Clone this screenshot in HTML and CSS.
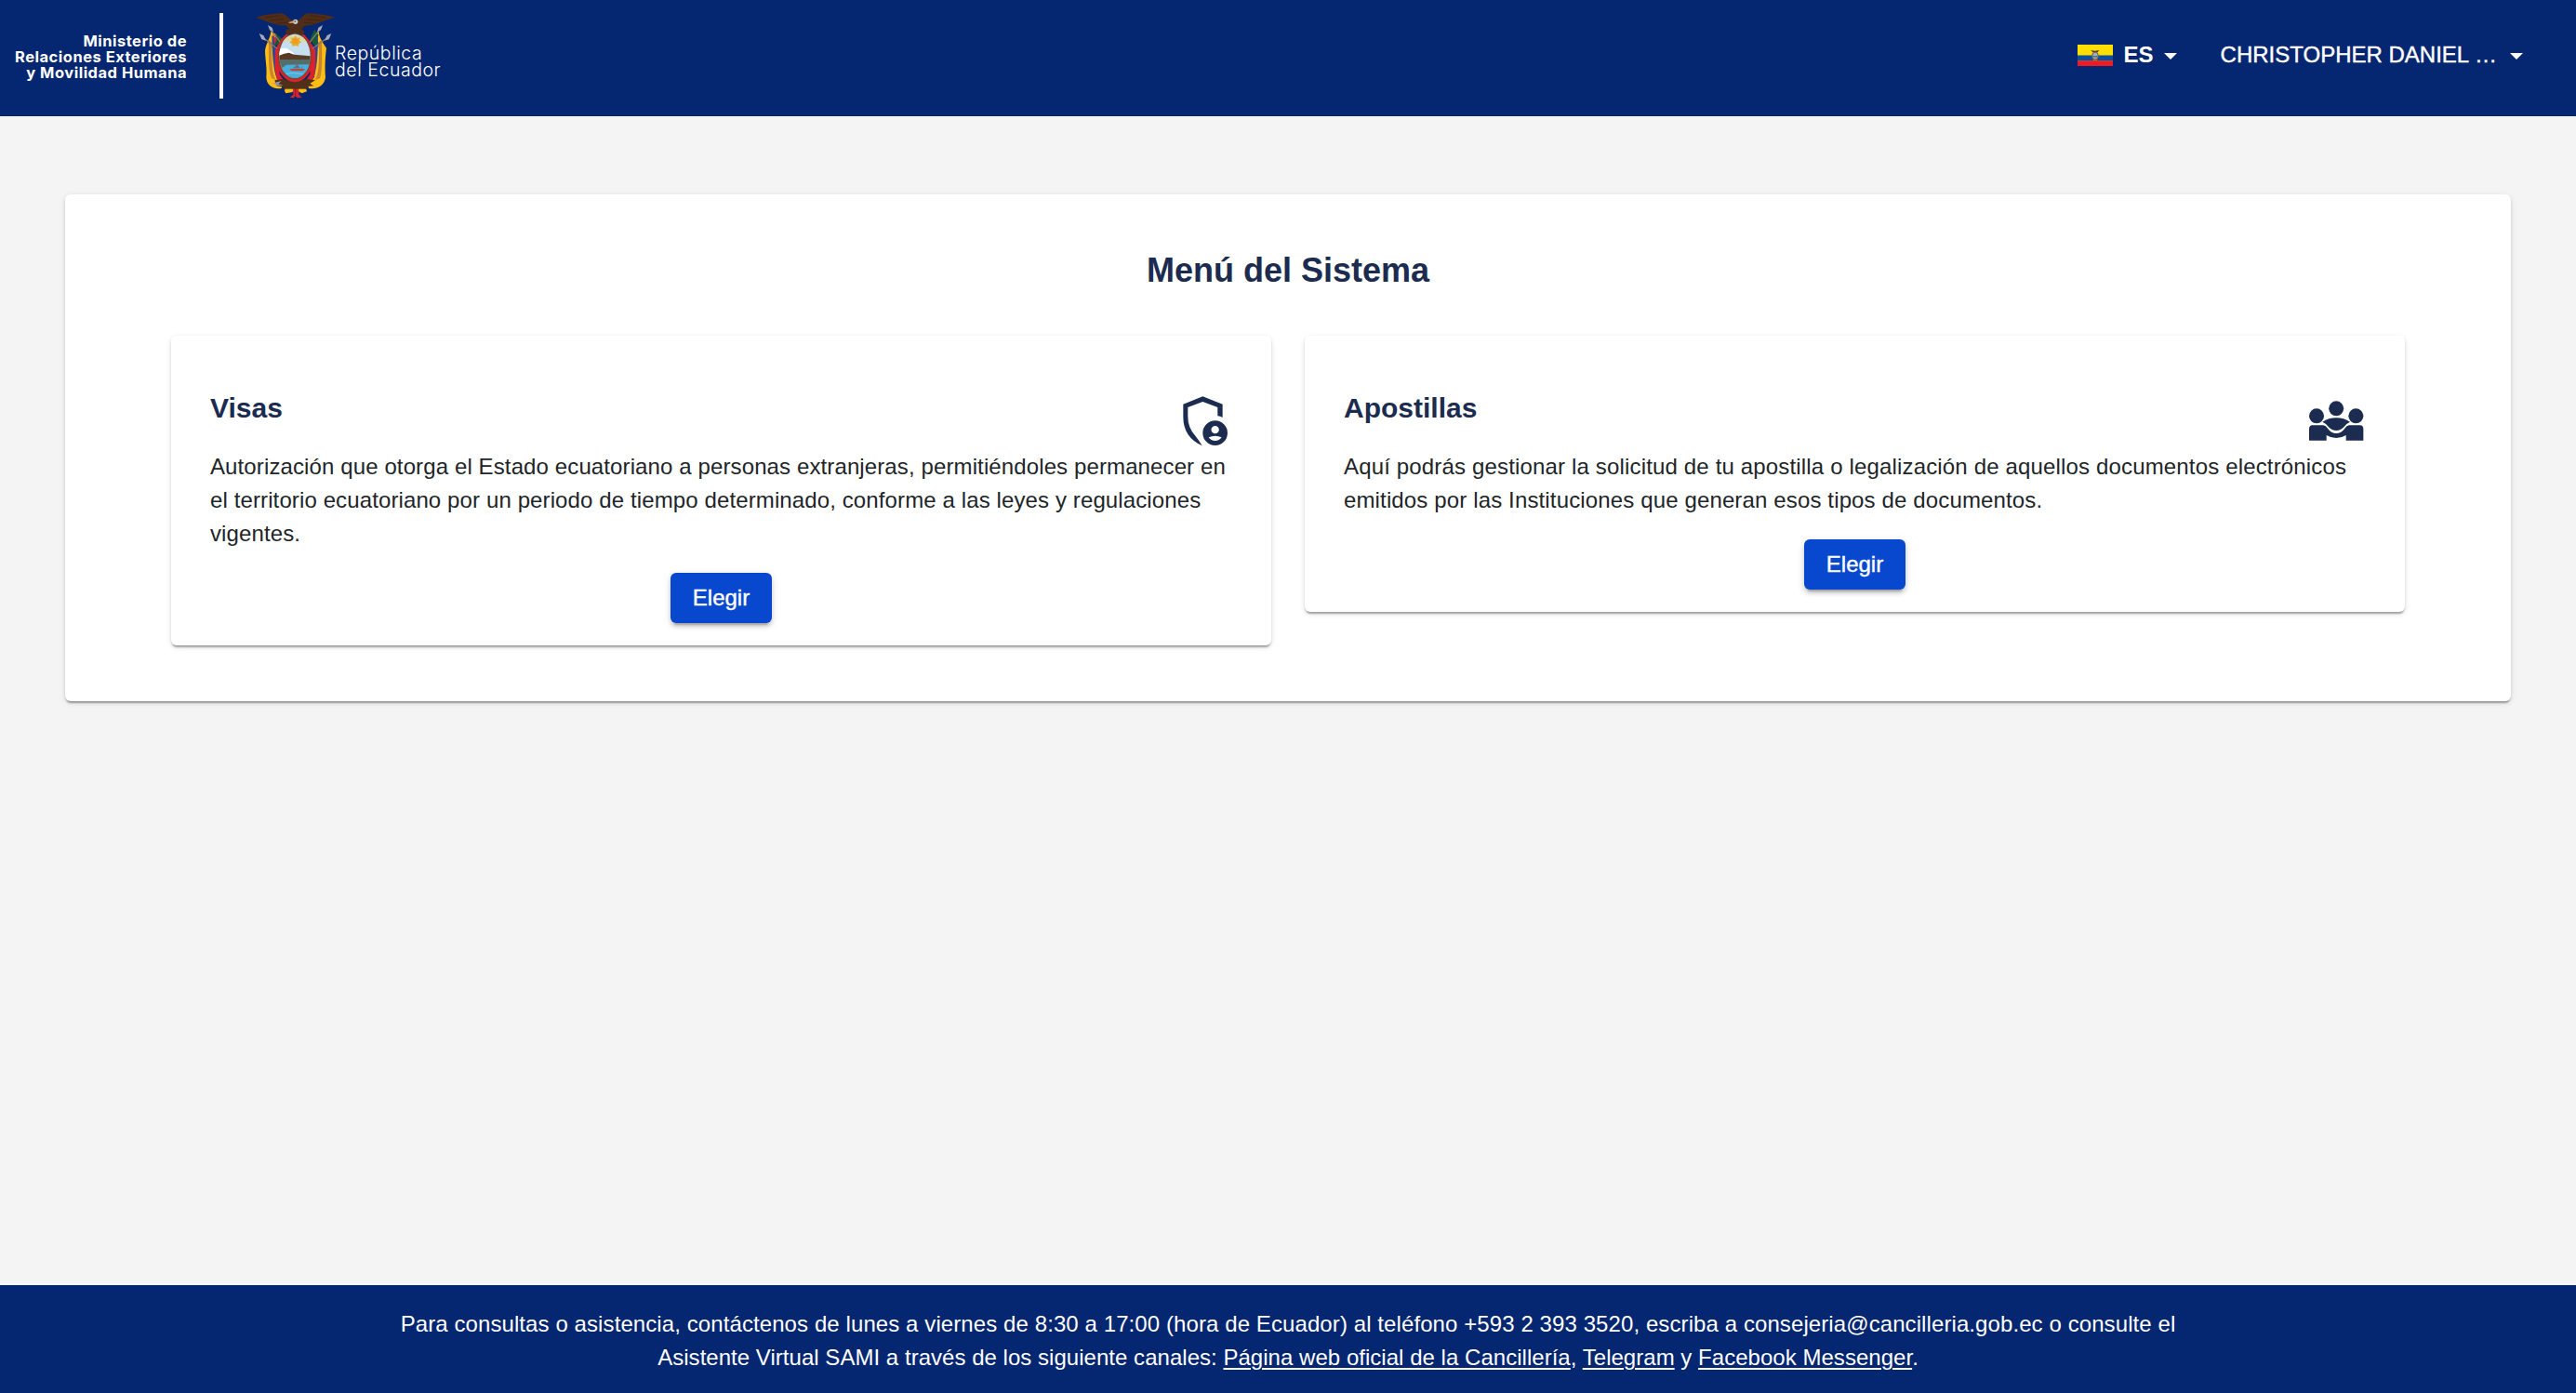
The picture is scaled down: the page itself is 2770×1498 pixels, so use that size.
FILE: index.html
```
<!DOCTYPE html>
<html lang="es">
<head>
<meta charset="utf-8">
<title>Menú del Sistema</title>
<link rel="stylesheet" href="styles.css">
</head>
<body>
<header class="header">
  <div class="ministry">Ministerio de<br>Relaciones Exteriores<br>y Movilidad Humana</div>
  <div class="divider"></div>
  <svg class="emblem" viewBox="0 0 285 330" aria-hidden="true">
    <!-- flags -->
    <path d="M64 86 C62 110 46 128 45 150 C46 180 52 205 49 235 C50 262 75 275 98 270 L104 248 L84 235 L76 150 L80 95Z" fill="#fdbd14"/>
    <path d="M218 86 C220 110 236 128 243 140 C238 180 238 205 240 235 C236 262 212 275 186 270 L180 248 L204 235 L212 150 L204 95Z" fill="#fdbd14"/>
    <path d="M56 112 L74 130 L66 142 C68 185 66 215 78 240 L90 246 L66 238 C54 210 58 160 56 112Z" fill="#c9862d"/>
    <path d="M228 112 L212 130 L220 142 C218 185 220 215 208 240 L196 246 L222 238 C232 210 228 160 228 112Z" fill="#c9862d"/>
    <path d="M67 100 L77 105 L78 150 L92 235 L84 240 C72 215 68 160 67 100Z" fill="#27489c"/>
    <path d="M216 100 L206 105 L206 150 L192 235 L200 240 C212 215 216 160 216 100Z" fill="#27489c"/>
    <path d="M78 145 L92 120 V225 L112 252 L86 246 C74 220 76 180 78 145Z M207 145 L190 120 V225 L172 252 L198 246 C210 220 208 180 207 145Z" fill="#d9222d"/>
    <path d="M70 92 L78 108 L90 112 L76 130Z M213 92 L205 108 L190 112 L208 130Z" fill="#d9222d"/>
    <path d="M80 94 L98 108 L112 106 L96 122 L86 130 L72 136 L82 115Z M205 80 L196 98 L190 112 L204 132 L218 124 L210 110 L218 98Z" fill="#125b35"/>
    <!-- lances -->
    <path d="M38 106 L90 146 M62 80 L100 128 M247 106 L192 146 M222 80 L184 128" stroke="#8d7772" stroke-width="4" fill="none"/>
    <path d="M54 66 L68 74 L72 88 L60 82Z M26 93 L40 99 L48 116 L34 112Z M231 66 L217 74 L213 88 L225 82Z M259 93 L245 99 L237 116 L251 112Z" fill="#a5a9b8"/>
    <!-- ribbons under the shield -->
    <path d="M112 262 L138 262 L134 282 L112 286 L108 278Z M150 262 L174 262 L180 280 L164 286 L150 278Z" fill="#fdbd14"/>
    <path d="M134 260 H153 L154 290 L164 299 L149 301 L143 295 L137 301 L125 299 L136 290Z" fill="#d9222d"/>
    <path d="M143 262 V296" stroke="#7d2230" stroke-width="3"/>
    <path d="M76 244 L102 240 L140 250 L180 240 L207 244 L190 254 L202 262 L180 264 L140 258 L106 266 L82 262Z" fill="#503019"/>
    <path d="M104 244 H182 V272 H104Z" fill="#503019"/>
    <path d="M72 253 L98 246 L88 256 L104 260 L84 262Z" fill="#9b94a0"/>
    <!-- oval shield -->
    <ellipse cx="141" cy="168" rx="60" ry="82" fill="#d9222d"/>
    <ellipse cx="141" cy="166" rx="54" ry="75" fill="#704a2d"/>
    <clipPath id="oval"><ellipse cx="141" cy="166" rx="50" ry="71"/></clipPath>
    <g clip-path="url(#oval)">
      <rect x="85" y="90" width="112" height="155" fill="#c5dff0"/>
      <path d="M92 120 Q141 96 190 120" stroke="#e4d5a1" stroke-width="13" fill="none"/>
      <path d="M85 146 Q106 137 119 143 L140 158 L110 166 L85 168Z" fill="#fff"/>
      <path d="M85 166 Q106 157 122 155 L138 161 L197 166 V186 H85Z" fill="#573b24"/>
      <path d="M85 178 H197 V195 L130 199 L85 190Z" fill="#566e6b"/>
      <path d="M85 178 H197 V245 H85Z" fill="#566e6b"/>
      <path d="M85 214 L114 194 L185 193 L197 200 V245 H85Z" fill="#48aedd"/>
      <path d="M124 207 L174 207 L168 214 L130 214Z" fill="#b94737"/>
      <path d="M148 192 L157 204 H139Z M164 199 V207 M138 200 V207" fill="#64717d" stroke="#64717d" stroke-width="2"/>
      <path d="M110 225 Q132 216 174 226" stroke="#7bc8e9" stroke-width="3" fill="none"/>
    </g>
    <path d="M143 99 L148 107 L158 107 L156 116 L163 121 L154 127 L152 135 L143 132 L134 135 L132 127 L123 121 L131 116 L128 107 L138 107Z" fill="#e7ae2b"/>
    <circle cx="143" cy="118" r="9" fill="#f2991f"/>
    <!-- condor -->
    <path d="M15 41 C42 33 70 29 101 28 C116 35 124 48 136 51 H151 C160 47 165 35 180 28 C213 29 243 33 270 41 L239 51 C220 59 194 68 173 68 L163 79 L173 88 L164 100 L142 91 L119 99 L110 85 L123 77 L111 67 C82 69 57 57 44 52Z" fill="#502d18"/>
    <path d="M45 42 L92 35 M58 51 L105 47 M81 61 L115 58 M239 42 L191 35 M226 51 L178 47 M204 61 L171 58" stroke="#402411" stroke-width="3"/>
    <circle cx="143" cy="55" r="8" fill="#c8cac6"/>
    <path d="M120 57 L137 52 V59 L125 60Z" fill="#bda17a"/>
    <circle cx="142" cy="54" r="3" fill="#756c64"/>
  </svg>
  <div class="republic">República<br>del Ecuador</div>
  <nav class="nav">
    <svg class="flag" viewBox="0 0 38 23" aria-hidden="true">
      <rect width="38" height="23" fill="#ffdf00"/>
      <rect y="11.5" width="38" height="6" fill="#0850a0"/>
      <rect y="17.3" width="38" height="5.7" fill="#ed1c24"/>
      <path d="M14 6 L18.5 6.8 L23.5 6 L21 8.5 H17Z" fill="#4b3828"/>
      <path d="M14.5 9 L17 17 H21 L23.5 9 L21 16 H17Z" fill="#b8782b"/>
      <ellipse cx="19" cy="12" rx="3.8" ry="4.5" fill="#875f48"/>
      <ellipse cx="19" cy="12" rx="2.5" ry="3.3" fill="#8bb9d5"/>
      <path d="M16.7 12 H21.3 V13.5 H16.7Z" fill="#536c68"/>
    </svg>
    <span class="lang">ES</span>
    <svg class="caret" viewBox="0 0 14 7" aria-hidden="true"><path d="M0 0H14L7 7Z"/></svg>
    <span class="user">CHRISTOPHER DANIEL …</span>
    <svg class="caret" viewBox="0 0 14 7" aria-hidden="true"><path d="M0 0H14L7 7Z"/></svg>
  </nav>
</header>
<main class="main">
  <section class="panel">
    <h1 class="title">Menú del Sistema</h1>
    <div class="cards">
      <article class="card">
        <div class="card-head">
          <h2>Visas</h2>
          <svg class="icon icon-visa" viewBox="156 107 145 161" aria-hidden="true">
            <path d="M220 108 L284 133 V176 Q277 172 268 171 V143 L220 125 L172 143 V174 Q172 208 195 234 Q205 246 218 267 Q157 240 157 174 V133Z"/>
            <path fill-rule="evenodd" d="M260 186a40 40 0 1 0 0 80a40 40 0 1 0 0-80Z M260 203a12.500 12.500 0 1 1 0 25a12.500 12.500 0 1 1 0-25Z M239 240Q260 231 281 240Q274 251 260 251T239 240Z"/>
          </svg>
        </div>
        <p class="desc">Autorización que otorga el Estado ecuatoriano a personas extranjeras, permitiéndoles permanecer en<br>el territorio ecuatoriano por un periodo de tiempo determinado, conforme a las leyes y regulaciones<br>vigentes.</p>
        <button class="btn">Elegir</button>
      </article>
      <article class="card card-wide">
        <div class="card-head">
          <h2>Apostillas</h2>
          <svg class="icon icon-people" viewBox="130 123 176 129" aria-hidden="true">
            <circle cx="154" cy="172" r="24"/><circle cx="217.500" cy="148" r="24"/><circle cx="281" cy="172" r="24"/>
            <path d="M173 191 Q193 178 217.500 178 T262 191 Q250 196 242 208 Q232 219 217.500 219 T193 208 Q184 195 173 191Z"/>
            <path d="M140 202 H176 Q184 203 190 212 Q201 228 217.500 228 T245 212 Q251 203 259 202 H295 Q305 203 305 214 V251 H249 V234 Q235 243 217.500 243 T186 234 V251 H130 V214 Q130 203 140 202Z"/>
          </svg>
        </div>
        <p class="desc">Aquí podrás gestionar la solicitud de tu apostilla o legalización de aquellos documentos electrónicos<br><span class="line-tight">emitidos por las Instituciones que generan esos tipos de documentos.</span></p>
        <button class="btn">Elegir</button>
      </article>
    </div>
  </section>
</main>
<footer class="footer">
  <span class="footer-line">Para consultas o asistencia, contáctenos de lunes a viernes de 8:30 a 17:00 (hora de Ecuador) al teléfono +593 2 393 3520, escriba a consejeria@cancilleria.gob.ec o consulte el</span><br>
  Asistente Virtual SAMI a través de los siguiente canales: <a href="#">Página web oficial de la Cancillería</a>, <a href="#">Telegram</a> y <a href="#">Facebook Messenger</a>.
</footer>
</body>
</html>
```
FILE: styles.css
```
* { box-sizing: border-box; }

body {
  margin: 0;
  min-height: 100vh;
  display: flex;
  flex-direction: column;
  background: #f4f4f4;
  color: #212529;
  font: 24px/36px "Liberation Sans", Arial, sans-serif;
}

.header {
  height: 125px;
  display: flex;
  align-items: flex-start;
  background: #052670;
  color: #fff;
}

.ministry {
  width: 201px;
  padding-top: 35.500px;
  text-align: right;
  white-space: nowrap;
  font: 700 16.5px/17px Inter, sans-serif;
  letter-spacing: 0.5px;
}

.divider {
  width: 4px;
  height: 92px;
  margin: 14px 30px 0 35px;
  background: #fff;
}

.emblem {
  width: 95px;
  height: 110px;
  margin-top: 5px;
}

.republic {
  margin: 47.500px 0 0 -5px;
  white-space: nowrap;
  font: 300 19.5px/18.3px Inter, sans-serif;
  letter-spacing: 0.55px;
}

.nav {
  margin-left: auto;
  height: 118px;
  padding-right: 57px;
  display: flex;
  align-items: center;
}

.flag { width: 38px; height: 23px; margin-right: 12px; }
.lang { font-weight: 700; }
.user { margin-left: 47px; -webkit-text-stroke: 0.4px #fff; }
.caret { width: 14px; height: 7px; margin: 3px 0 0 11px; fill: #fff; }
.user + .caret { margin-left: 14px; }

.main { flex: 1; padding: 84px 70px 0; }

.panel {
  padding: 60px 114px 60px;
  background: #fff;
}

.panel, .card {
  border-radius: 6px;
  box-shadow: 0 4px 2px -2px rgba(0, 0, 0, 0.2), 0 2px 2px rgba(0, 0, 0, 0.14), 0 2px 6px rgba(0, 0, 0, 0.12);
}

.title {
  margin: 0 0 48px;
  text-align: center;
  font-size: 36px;
  line-height: 44px;
  color: #1b2c50;
}

.cards {
  display: grid;
  grid-template-columns: 1fr 1fr;
  gap: 36px;
  align-items: start;
}

.card {
  padding: 60px 42px 24px;
  background: #fff;
}

.card-head {
  height: 36px;
  margin-bottom: 27px;
  display: flex;
  justify-content: space-between;
  align-items: flex-start;
}

.card-head h2 {
  margin: 0;
  font-size: 30px;
  line-height: 36px;
  color: #1b2c50;
}

.icon { fill: #1b2c50; }
.icon-visa { width: 48.300px; height: 53.700px; margin: 5px 5px 0 0; }
.icon-people { width: 58.700px; height: 43px; margin: 10px 2px 0 0; }

.desc {
  margin: 0 0 24px;
  white-space: nowrap;
  letter-spacing: 0.115px;
}

.card-wide .desc { letter-spacing: 0.16px; }
.card-wide .line-tight { letter-spacing: 0.14px; }

.btn {
  display: block;
  width: 109px;
  height: 54px;
  margin: 0 auto;
  padding: 0;
  border: 0;
  border-radius: 6px;
  background: #0848cf;
  color: #fff;
  font: inherit;
  -webkit-text-stroke: 0.4px #fff;
  box-shadow: 0 6px 2px -4px rgba(0, 0, 0, 0.2), 0 4px 4px rgba(0, 0, 0, 0.14), 0 2px 10px rgba(0, 0, 0, 0.12);
}

.footer {
  height: 116px;
  padding-top: 24px;
  text-align: center;
  white-space: nowrap;
  background: #052670;
  color: #fff;
  letter-spacing: 0.03px;
}

.footer-line { letter-spacing: 0.09px; }
.footer a { color: inherit; text-underline-offset: 3px; text-decoration-thickness: 2px; }
```
